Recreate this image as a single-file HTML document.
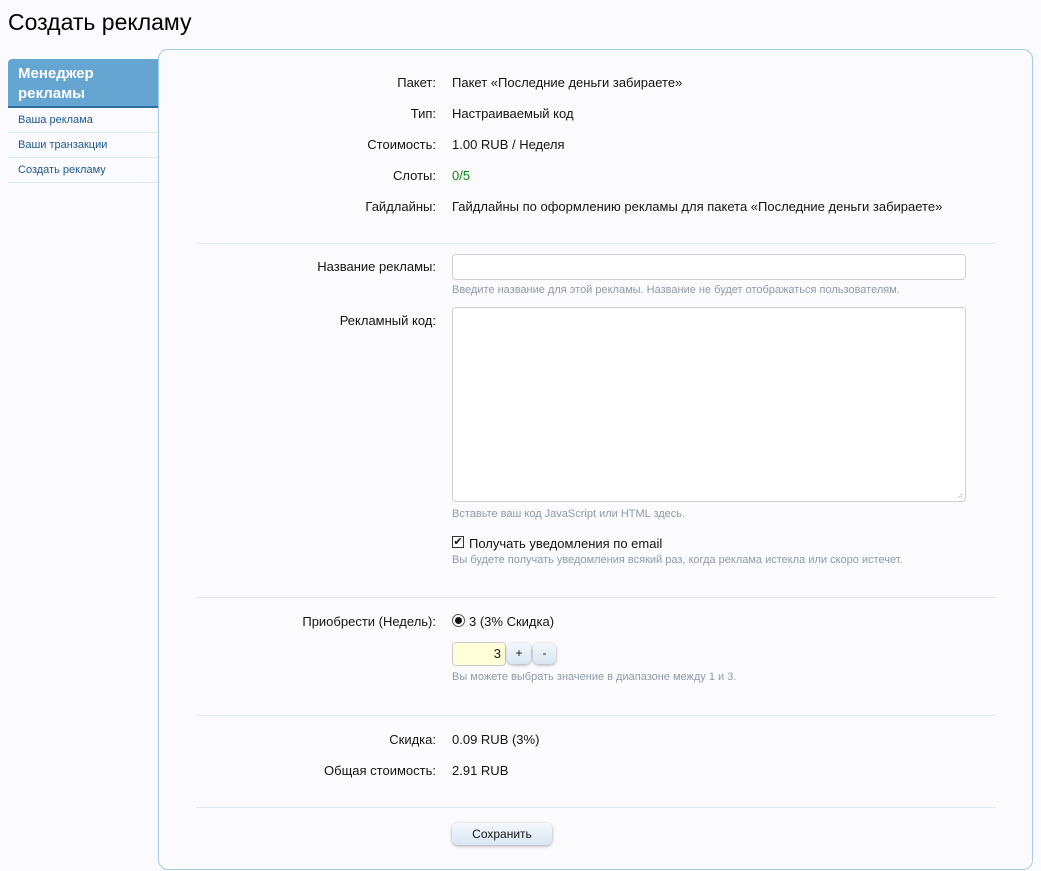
<!DOCTYPE html>
<html><head><meta charset="utf-8"><style>
*{box-sizing:border-box;margin:0;padding:0}
body{width:1041px;height:871px;background:#fafaff;font-family:"Liberation Sans","DejaVu Sans",sans-serif;font-size:13px;color:#141414;position:relative;overflow:hidden}
.a{position:absolute;white-space:nowrap}
h1{position:absolute;left:8px;top:9px;font-weight:normal;font-size:23px;color:#000}
.side{position:absolute;left:8px;top:59px;width:151px}
.sh{background:#65a5d1;border-bottom:2px solid #2e6ea0;color:#fff;font-weight:bold;font-size:15px;line-height:20px;padding:5px 10px 4px;height:49px;border-radius:4px 0 0 0}
.si{height:25px;border-bottom:1px solid #d7e9f6;padding-left:10px;line-height:24px;font-size:11px;color:#1c5a8c}
.panel{position:absolute;left:158px;top:49px;width:875px;height:821px;border:1px solid #a5cae4;border-radius:10px;background:#fbfbfe}
.l{position:absolute;right:605px;white-space:nowrap}
.v{position:absolute;left:452px;white-space:nowrap}
.sep{position:absolute;left:196px;width:800px;height:1px;background:#dfe8f2}
.hint{position:absolute;left:452px;font-size:11px;color:#8e9aa6;white-space:nowrap}
.inp{position:absolute;left:452px;width:514px;border:1px solid #cfcfcf;border-radius:4px;background:#fff}
.btn{position:absolute;border-radius:6px;background:linear-gradient(#f3f8fc,#d9e6f2);box-shadow:0 1px 3px rgba(0,0,0,.35);text-align:center;font-size:12px}
</style></head><body>
<h1>Создать рекламу</h1>
<div class="side">
<div class="sh">Менеджер<br>рекламы</div>
<div class="si">Ваша реклама</div>
<div class="si">Ваши транзакции</div>
<div class="si">Создать рекламу</div>
</div>
<div class="panel"></div>
<div class="l" style="top:75px">Пакет:</div><div class="v" style="top:75px">Пакет «Последние деньги забираете»</div>
<div class="l" style="top:106px">Тип:</div><div class="v" style="top:106px">Настраиваемый код</div>
<div class="l" style="top:137px">Стоимость:</div><div class="v" style="top:137px">1.00 RUB / Неделя</div>
<div class="l" style="top:168px">Слоты:</div><div class="v" style="top:168px;color:#0a8a0a">0/5</div>
<div class="l" style="top:199px">Гайдлайны:</div><div class="v" style="top:199px">Гайдлайны по оформлению рекламы для пакета «Последние деньги забираете»</div>
<div class="sep" style="top:243px"></div>
<div class="l" style="top:259px">Название рекламы:</div>
<div class="inp" style="top:254px;height:26px"></div>
<div class="hint" style="top:284px">Введите название для этой рекламы. Название не будет отображаться пользователям.</div>
<div class="l" style="top:313px">Рекламный код:</div>
<div class="inp" style="top:307px;height:195px"><span class="a" style="right:3px;bottom:1px;font-size:8px;color:#aaa;letter-spacing:-1px">⠴</span></div>
<div class="hint" style="top:508px">Вставьте ваш код JavaScript или HTML здесь.</div>
<div class="a" style="left:452px;top:536px;width:12px;height:12px;border:1px solid #333;background:#fff;font-size:11px;line-height:10px;text-align:center;font-weight:bold">✔</div>
<div class="v" style="top:536px;left:469px">Получать уведомления по email</div>
<div class="hint" style="top:554px">Вы будете получать уведомления всякий раз, когда реклама истекла или скоро истечет.</div>
<div class="sep" style="top:597px"></div>
<div class="l" style="top:614px">Приобрести (Недель):</div>
<div class="a" style="left:452px;top:614px;width:13px;height:13px;border:1px solid #555;border-radius:50%;background:#fff"><div style="position:absolute;left:2px;top:2px;width:7px;height:7px;border-radius:50%;background:#111"></div></div>
<div class="v" style="top:614px;left:469px">3 (3% Скидка)</div>
<div class="a" style="left:452px;top:642px;width:54px;height:24px;border:1px solid #ccc;border-radius:4px;background:#ffffd8;text-align:right;padding-right:4px;line-height:22px">3</div>
<div class="btn" style="left:507px;top:643px;width:24px;height:21px;line-height:21px">+</div>
<div class="btn" style="left:533px;top:643px;width:23px;height:21px;line-height:21px">-</div>
<div class="hint" style="top:671px">Вы можете выбрать значение в диапазоне между 1 и 3.</div>
<div class="sep" style="top:715px"></div>
<div class="l" style="top:732px">Скидка:</div><div class="v" style="top:732px">0.09 RUB (3%)</div>
<div class="l" style="top:763px">Общая стоимость:</div><div class="v" style="top:763px">2.91 RUB</div>
<div class="sep" style="top:807px"></div>
<div class="btn" style="left:452px;top:823px;width:100px;height:22px;line-height:22px">Сохранить</div>
</body></html>
